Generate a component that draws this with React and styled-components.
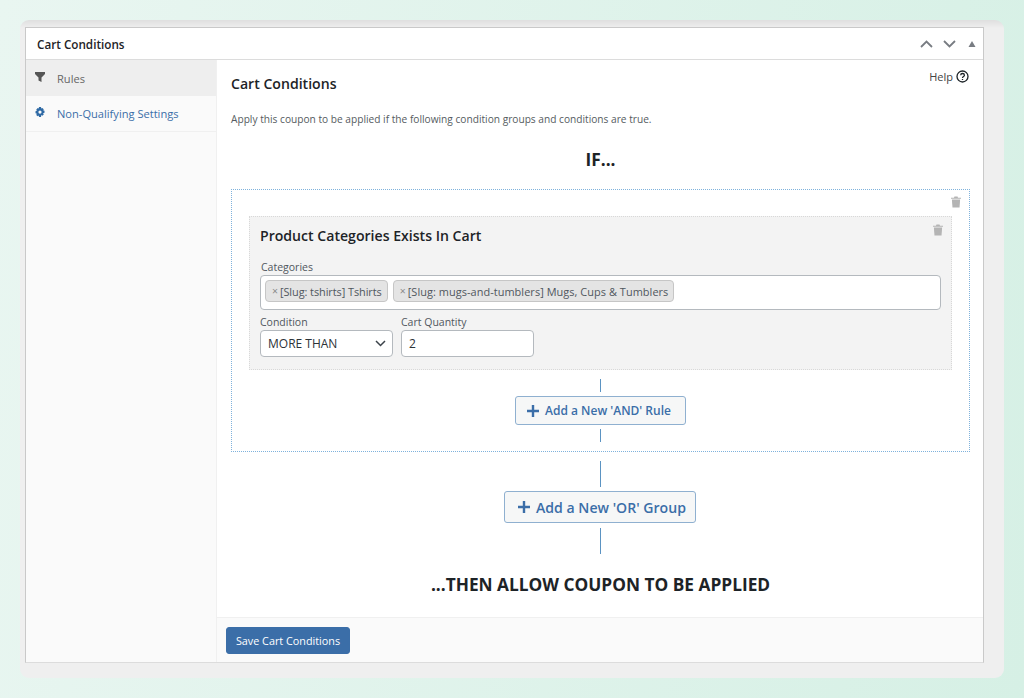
import React from "react";
import styled, { createGlobalStyle } from "styled-components";

const Global = createGlobalStyle`
  html, body { margin: 0; padding: 0; }
  body { font-family: "Open Sans", "Noto Sans", sans-serif; color: #1d2327; }
  * { box-sizing: border-box; }
`;

const Page = styled.div`
  width: 1024px; height: 698px; overflow: hidden; padding: 20px;
  background: linear-gradient(100deg, #e9f6f1 0%, #d6f0e5 100%);
`;
const Frame = styled.div`
  width: 984px; height: 658px; padding: 7px 20px 15px 5px;
  background: linear-gradient(#dfdfdf 0, #efefef 8px);
  border-radius: 9px;
`;
const Postbox = styled.div`
  width: 959px; height: 636px; display: flex; flex-direction: column;
  background: #fff; border: 1px solid #c9c9c9; border-bottom-color: #dcdcdc;
`;
const Header = styled.header`
  height: 32px; flex: none; display: flex; align-items: center; justify-content: space-between;
  padding: 0 7px 0 11px; border-bottom: 1px solid #dcdcdc;
`;
const Title = styled.h2`
  margin: 0; font-size: 11.7px; font-weight: 600; color: #1d2327;
`;
const Handles = styled.div`
  display: flex; align-items: center; gap: 10px; color: #787c82;
`;
const Body = styled.div`
  flex: 1; display: flex; min-height: 0;
`;
const Sidebar = styled.nav`
  width: 191px; flex: none; background: #fafafa; border-right: 1px solid #f0f0f0;
`;
const Tab = styled.a`
  display: flex; align-items: center; gap: 12px; height: 36px; padding: 0 0 0 9px;
  font-size: 11.1px; color: ${p => (p.$active ? "#666" : "#3b6ea8")};
  background: ${p => (p.$active ? "#eeeeee" : "transparent")};
  border-bottom: ${p => (p.$active ? "0" : "1px solid #f0f0f0")};
  svg { flex: none; margin-top: -3px; }
`;
const Main = styled.section`
  flex: 1; display: flex; flex-direction: column; min-width: 0;
`;
const Content = styled.div`
  flex: 1; position: relative; padding: 15px 13px 0 14px;
`;
const Help = styled.a`
  position: absolute; top: 9px; right: 14px; display: flex; align-items: center; gap: 3px;
  font-size: 11px; color: #444;
`;
const Heading = styled.h1`
  margin: 0; font-size: 14.1px; font-weight: 600; line-height: 18px; color: #1d2327;
`;
const Intro = styled.p`
  margin: 18px 0 0; font-size: 10.17px; line-height: 16px; color: #555b60;
`;
const IfLabel = styled.div`
  margin-top: 22px; text-align: center; font-size: 17.3px; line-height: 22px; font-weight: 700; color: #1d2327;
`;
const Group = styled.div`
  margin-top: 18px; height: 263px; padding: 26px 17px 0 17px; position: relative;
  border: 1px dotted #7fb2dc; display: flex; flex-direction: column; align-items: stretch;
`;
const Trash = styled.span`
  position: absolute; top: ${p => p.$top}px; right: ${p => p.$right}px; display: flex; color: #b4b4b4;
`;
const Rule = styled.div`
  height: 154px; padding: 9px 10px 0 10px; position: relative; flex: none;
  background: #f3f3f3; border: 1px dotted #d8d8d8;
`;
const RuleTitle = styled.h3`
  margin: 0; font-size: 14.1px; line-height: 20px; font-weight: 600; color: #1d2327;
`;
const FieldLabel = styled.label`
  display: block; font-size: 10.5px; line-height: 13px; color: #50575e;
`;
const CategoriesLabel = styled(FieldLabel)`
  margin-top: 15px; padding-left: 1px;
`;
const MultiSelect = styled.div`
  margin-top: 1px; height: 35px; display: flex; align-items: flex-start; gap: 5px; padding: 4px 0 0 4px;
  background: #fff; border: 1px solid #b4b9be; border-radius: 4px;
`;
const Chip = styled.span`
  height: 22px; display: inline-flex; align-items: center; gap: 2px; padding: 0 5px 0 6px;
  font-size: 10.95px; white-space: nowrap; color: #50575e; letter-spacing: ${p => p.$track}px;
  background: #e4e4e4; border: 1px solid #c6c6c6; border-radius: 4px;
`;
const ChipX = styled.span`
  color: #8a8a8a; font-size: 10.5px;
`;
const Row = styled.div`
  display: flex; gap: 8px; margin-top: 6px;
`;
const Field = styled.div`
  width: ${p => p.$w}px;
`;
const Control = styled.div`
  margin-top: 1px; height: 27px; display: flex; align-items: center; justify-content: space-between;
  padding: 0 6px 0 7px; font-size: 12px; color: #2c3338;
  background: #fff; border: 1px solid #b4b9be; border-radius: 4px;
`;
const Line = styled.div`
  width: 1px; height: ${p => p.$h}px; margin: ${p => p.$mt || 0}px auto 0; background: #5b93c2; flex: none;
`;
const OutlineBtn = styled.button`
  display: flex; align-items: center; justify-content: flex-start; gap: 6px;
  margin: ${p => p.$mt}px auto ${p => p.$mb}px ${p => p.$ml}px;
  width: ${p => p.$w}px; height: ${p => p.$h}px; padding: 0 0 0 ${p => p.$pl}px; flex: none;
  font-family: inherit; font-weight: 600; font-size: ${p => p.$fs}px; color: #3b6ea8;
  background: #f6f7f7; border: 1px solid #8fb0d0; border-radius: 3px;
`;
const Then = styled.div`
  margin-top: 19px; text-align: center; font-size: 17.3px; line-height: 24px; font-weight: 700; color: #1d2327;
`;
const Footer = styled.footer`
  height: 45px; flex: none; padding: 9px 0 0 9px; background: #fafafa; border-top: 1px solid #f0f0f0;
`;
const Save = styled.button`
  width: 124px; height: 27px; padding: 0; font-family: inherit; font-size: 10.8px; color: #fff;
  background: #3b6ea8; border: 1px solid #3b6ea8; border-radius: 3px;
`;

const TrashIcon = () => (
  <svg width="10" height="12" viewBox="0 0 11 12" fill="currentColor">
    <path d="M3.8 0h3.4l.5 1.2H11v1.3H0V1.2h3.3z" />
    <path d="M1 3.3h9L9.4 12H1.6z" />
  </svg>
);
const Plus = () => (
  <svg width="12" height="12" viewBox="0 0 12 12" fill="currentColor">
    <path d="M4.8 0h2.4v4.8H12v2.4H7.2V12H4.8V7.2H0V4.8h4.8z" />
  </svg>
);

export default function App() {
  return (
    <Page>
      <Global />
      <Frame>
        <Postbox>
          <Header>
            <Title>Cart Conditions</Title>
            <Handles>
              <svg width="13" height="8" viewBox="0 0 13 8" fill="none" stroke="currentColor" strokeWidth="1.8"><path d="M1 7l5.5-5.5L12 7" /></svg>
              <svg width="13" height="8" viewBox="0 0 13 8" fill="none" stroke="currentColor" strokeWidth="1.8"><path d="M1 1l5.5 5.5L12 1" /></svg>
              <svg width="8" height="6" viewBox="0 0 8 6" fill="currentColor" style={{ marginLeft: 2 }}><path d="M4 0l3.5 6H.5z" /></svg>
            </Handles>
          </Header>
          <Body>
            <Sidebar>
              <Tab $active>
                <svg width="10" height="10" viewBox="0 0 10 10" fill="#555"><path d="M0 0h10v2L6.5 5.5V10l-3-1.5v-3L0 2z" /></svg>
                Rules
              </Tab>
              <Tab>
                <svg width="10" height="10" viewBox="0 0 10 10" fill="#2f6aa5"><path fillRule="evenodd" d="M4 0h2l.3 1.4 1-.5 1.5 1.3-.7 1.1 1.4.5v2l-1.4.4.7 1.2-1.5 1.4-1-.7L6 10H4l-.3-1.4-1 .7-1.5-1.4.7-1.2L.5 6.3v-2l1.4-.5-.7-1.1L2.7.9l1 .5zM5 3.5a1.6 1.6 0 1 0 0 3.2 1.6 1.6 0 0 0 0-3.2z" /></svg>
                Non-Qualifying Settings
              </Tab>
            </Sidebar>
            <Main>
              <Content>
                <Help>
                  Help
                  <svg width="13" height="13" viewBox="0 0 13 13" fill="none" stroke="#1d2327" strokeWidth="1.3"><circle cx="6.5" cy="6.5" r="5.5" /><path d="M4.7 5.2c0-2.3 3.7-2.3 3.7 0 0 1.4-1.9 1.3-1.9 2.7" /><path d="M6.5 9v1" /></svg>
                </Help>
                <Heading>Cart Conditions</Heading>
                <Intro>Apply this coupon to be applied if the following condition groups and conditions are true.</Intro>
                <IfLabel>IF...</IfLabel>
                <Group>
                  <Trash $top={6} $right={8}><TrashIcon /></Trash>
                  <Rule>
                    <Trash $top={7} $right={8}><TrashIcon /></Trash>
                    <RuleTitle>Product Categories Exists In Cart</RuleTitle>
                    <CategoriesLabel>Categories</CategoriesLabel>
                    <MultiSelect>
                      <Chip $track={-0.08}><ChipX>×</ChipX>[Slug: tshirts] Tshirts</Chip>
                      <Chip $track={0.05}><ChipX>×</ChipX>[Slug: mugs-and-tumblers] Mugs, Cups &amp; Tumblers</Chip>
                    </MultiSelect>
                    <Row>
                      <Field $w={133}>
                        <FieldLabel>Condition</FieldLabel>
                        <Control>
                          MORE THAN
                          <svg width="11" height="7" viewBox="0 0 11 7" fill="none" stroke="#3c434a" strokeWidth="1.5"><path d="M1 1l4.5 4.5L10 1" /></svg>
                        </Control>
                      </Field>
                      <Field $w={133}>
                        <FieldLabel>Cart Quantity</FieldLabel>
                        <Control>2</Control>
                      </Field>
                    </Row>
                  </Rule>
                  <Line $h={13} $mt={9} />
                  <OutlineBtn $w={171} $h={29} $mt={4} $mb={4} $ml={266} $pl={11} $fs={12}><Plus />Add a New 'AND' Rule</OutlineBtn>
                  <Line $h={13} />
                </Group>
                <Line $h={26} $mt={9} />
                <OutlineBtn $w={192} $h={32} $mt={4} $mb={5} $ml={273} $pl={13} $fs={14.1}><Plus />Add a New 'OR' Group</OutlineBtn>
                <Line $h={26} />
                <Then>...THEN ALLOW COUPON TO BE APPLIED</Then>
              </Content>
              <Footer><Save>Save Cart Conditions</Save></Footer>
            </Main>
          </Body>
        </Postbox>
      </Frame>
    </Page>
  );
}
